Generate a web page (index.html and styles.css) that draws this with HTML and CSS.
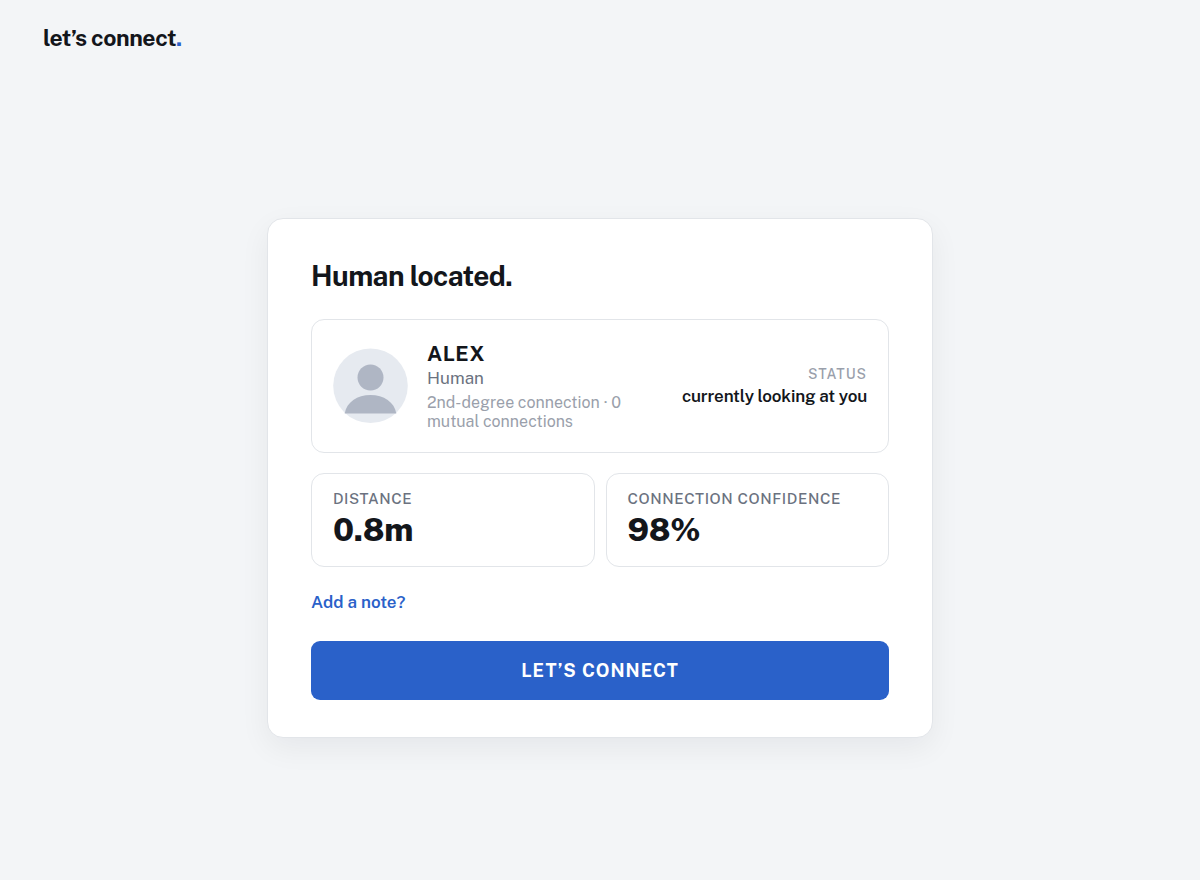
FILE: index.html
```html
<!DOCTYPE html>
<html lang="en">
<head>
  <meta charset="utf-8">
  <meta name="viewport" content="width=device-width, initial-scale=1">
  <title>let’s connect.</title>
  <link rel="stylesheet" href="styles.css">
</head>
<body>
  <header class="site-header">
    <span class="brand">let’s connect<span class="brand-dot">.</span></span>
  </header>
  <main class="stage">
    <section class="card">
      <h1 class="card-title">Human located.</h1>

      <div class="profile">
        <svg class="avatar" viewBox="0 0 75 75" aria-hidden="true">
          <circle cx="37.5" cy="36.8" r="37.3" fill="#e6eaf0"/>
          <circle cx="37.5" cy="28.5" r="13" fill="#afb6c4"/>
          <path d="M11.7 64.4C13.5 53.2 24.3 46 37.5 46S61.5 53.2 63.3 64.4Z" fill="#afb6c4"/>
        </svg>
        <div class="identity">
          <h2 class="name">ALEX</h2>
          <p class="role">Human</p>
          <p class="degree">2nd-degree connection · 0 mutual connections</p>
        </div>
        <div class="status">
          <p class="status-label">STATUS</p>
          <p class="status-value">currently looking at you</p>
        </div>
      </div>

      <dl class="metrics">
        <div class="metric">
          <dt class="metric-label">DISTANCE</dt>
          <dd class="metric-value">0.8m</dd>
        </div>
        <div class="metric">
          <dt class="metric-label">CONNECTION CONFIDENCE</dt>
          <dd class="metric-value">98%</dd>
        </div>
      </dl>

      <a class="note-link" href="#note">Add a note?</a>
      <button class="connect" type="button">LET’S CONNECT</button>
    </section>
  </main>
</body>
</html>
```
FILE: styles.css
```css
* {
  box-sizing: border-box;
  margin: 0;
}

body {
  display: flex;
  flex-direction: column;
  min-height: 100vh;
  background: #f3f5f7;
  color: #13161b;
  font-family: "Public Sans", Inter, sans-serif;
}

.site-header {
  padding: 24px 43px;
}

.brand {
  display: block;
  font-size: 23px;
  line-height: 28px;
  font-weight: 700;
  letter-spacing: -0.02em;
}

.brand-dot {
  color: #2a61c9;
}

.stage {
  flex: 1;
  display: flex;
  align-items: center;
  justify-content: center;
}

.card {
  display: flex;
  flex-direction: column;
  width: 100%;
  max-width: 666px;
  padding: 40px 43px 37px;
  background: #fff;
  border: 1px solid #e2e5e9;
  border-radius: 16px;
  box-shadow: 0 10px 30px rgba(19, 22, 27, 0.06);
}

.card-title {
  margin-bottom: 26px;
  font-size: 28px;
  line-height: 34px;
  font-weight: 700;
  letter-spacing: -0.02em;
}

.profile {
  display: flex;
  align-items: center;
  gap: 19px;
  padding: 21px;
  border: 1px solid #e2e5e9;
  border-radius: 13px;
}

.avatar {
  flex: none;
  width: 75px;
  height: 75px;
  overflow: visible;
}

.identity {
  flex: 1;
}

.name {
  font-size: 21px;
  line-height: 26px;
  font-weight: 700;
  letter-spacing: 0.02em;
}

.role {
  margin-bottom: 4px;
  color: #6b7280;
  font-size: 17px;
  line-height: 22px;
}

.degree {
  color: #9a9fab;
  font-size: 16px;
  line-height: 19px;
}

.status {
  text-align: right;
  white-space: nowrap;
}

.status-label {
  color: #9a9fab;
  font-size: 14px;
  line-height: 20px;
  font-weight: 500;
  letter-spacing: 1px;
}

.status-value {
  font-size: 17px;
  line-height: 24px;
  font-weight: 600;
  letter-spacing: -0.01em;
}

.metrics {
  display: grid;
  grid-template-columns: 1fr 1fr;
  gap: 11px;
  margin: 20px 0 24px;
}

.metric {
  padding: 16px 21px;
  border: 1px solid #e2e5e9;
  border-radius: 13px;
}

.metric-label {
  margin-bottom: 2px;
  color: #6b7280;
  font-size: 15px;
  line-height: 18px;
  font-weight: 500;
  letter-spacing: 0.04em;
}

.metric-value {
  margin: 0;
  font-size: 32px;
  line-height: 40px;
  font-weight: 800;
  letter-spacing: -0.01em;
}

.note-link {
  align-self: flex-start;
  margin-bottom: 28px;
  color: #2a61c9;
  font-size: 17px;
  line-height: 22px;
  font-weight: 600;
  text-decoration: none;
}

.connect {
  padding: 18px 21px;
  border: 0;
  border-radius: 9px;
  background: #2a61c9;
  color: #fff;
  font: inherit;
  font-size: 18px;
  line-height: 23px;
  font-weight: 700;
  letter-spacing: 1px;
  cursor: pointer;
}
```
